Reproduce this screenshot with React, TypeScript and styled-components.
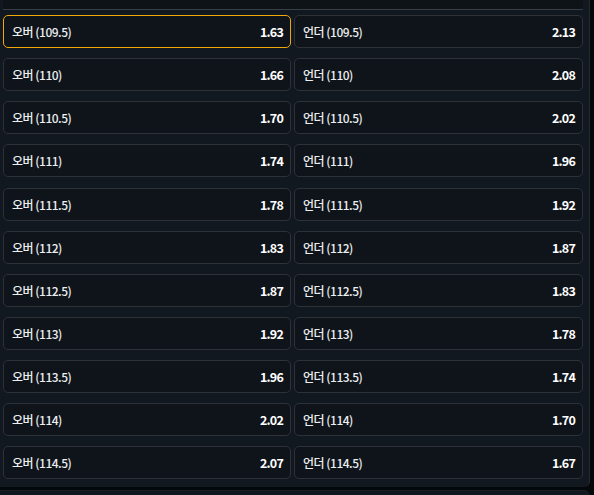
import React, { FC } from "react";
import styled, { createGlobalStyle } from "styled-components";

type Line = {
  point: string;
  over: string;
  under: string;
};

const lines: Line[] = [
  { point: "109.5", over: "1.63", under: "2.13" },
  { point: "110", over: "1.66", under: "2.08" },
  { point: "110.5", over: "1.70", under: "2.02" },
  { point: "111", over: "1.74", under: "1.96" },
  { point: "111.5", over: "1.78", under: "1.92" },
  { point: "112", over: "1.83", under: "1.87" },
  { point: "112.5", over: "1.87", under: "1.83" },
  { point: "113", over: "1.92", under: "1.78" },
  { point: "113.5", over: "1.96", under: "1.74" },
  { point: "114", over: "2.02", under: "1.70" },
  { point: "114.5", over: "2.07", under: "1.67" },
];

const GlobalStyle = createGlobalStyle`
  html, body {
    margin: 0;
    padding: 0;
    background: #05080b;
    font-family: "Noto Sans CJK KR", "Noto Sans", sans-serif;
  }
`;

type OddsButtonProps = {
  label: string;
  odds: string;
  selected?: boolean;
};

const OddsButton: FC<OddsButtonProps> = ({ label, odds, selected }) => {
  return (
    <Cell $selected={selected}>
      <Label>{label}</Label>
      <Odds>{odds}</Odds>
    </Cell>
  );
};

const App: FC = () => {
  return (
    <Page>
      <GlobalStyle />
      <Panel>
        <Header />
        <Grid>
          {lines.map((line, i) => (
            <React.Fragment key={line.point}>
              <OddsButton
                label={`오버 (${line.point})`}
                odds={line.over}
                selected={i === 0}
              />
              <OddsButton label={`언더 (${line.point})`} odds={line.under} />
            </React.Fragment>
          ))}
        </Grid>
      </Panel>
      <NextPanel />
    </Page>
  );
};

export default App;

const Page = styled.div`
  width: 594px;
  height: 495px;
  overflow: hidden;
  background: #05080b;
`;

const Panel = styled.div`
  width: 590px;
  height: 487px;
  box-sizing: border-box;
  padding: 0 3px;
  background: #121820;
  border-right: 1px solid #262b31;
  border-bottom-right-radius: 6px;
`;

const Header = styled.div`
  height: 9px;
  width: 580px;
  border-bottom: 1px solid #3a3f45;
  background: #0e1318;
`;

const Grid = styled.div`
  display: grid;
  grid-template-columns: 288px 289px;
  column-gap: 3px;
  row-gap: 10.15px;
  margin-top: 5px;
`;

const Cell = styled.div<{ $selected?: boolean }>`
  height: 33px;
  box-sizing: border-box;
  display: flex;
  align-items: center;
  justify-content: space-between;
  padding: 0 7px 0 8px;
  background: #0f141a;
  border: 1px solid ${(p) => (p.$selected ? "#f0a70a" : "#2e3238")};
  border-radius: 5px;
`;

const Label = styled.span`
  font-size: 12px;
  font-weight: 500;
  letter-spacing: -0.5px;
  color: #eceef0;
`;

const Odds = styled.span`
  font-size: 12.5px;
  font-weight: 700;
  letter-spacing: -0.8px;
  color: #ffffff;
`;

const NextPanel = styled.div`
  margin-top: 3px;
  width: 590px;
  height: 10px;
  background: #121820;
  border-top: 1px solid #1c2128;
  border-top-right-radius: 6px;
`;
